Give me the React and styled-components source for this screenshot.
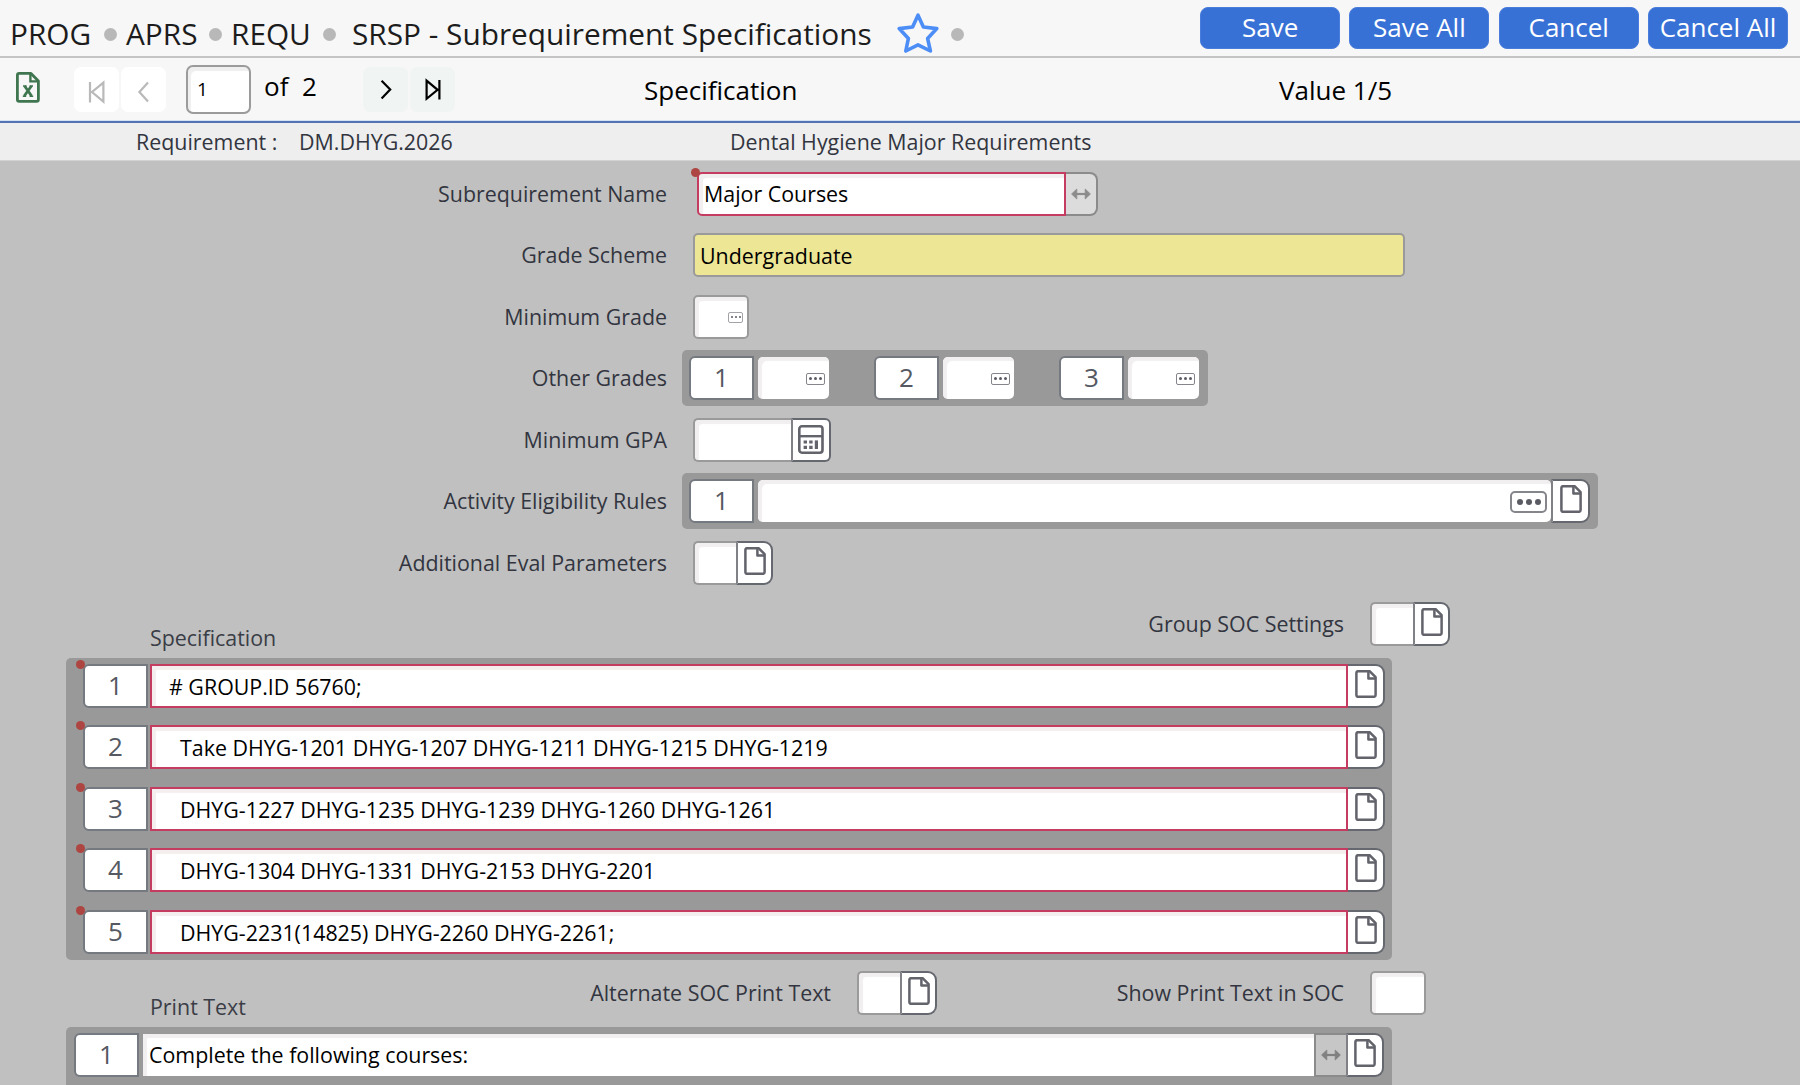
import styled, { createGlobalStyle } from 'styled-components';
import React from 'react';

const specLines = [
  { no: 1, text: '# GROUP.ID 56760;', indent: 13 },
  { no: 2, text: 'Take DHYG-1201 DHYG-1207 DHYG-1211 DHYG-1215 DHYG-1219', indent: 24 },
  { no: 3, text: 'DHYG-1227 DHYG-1235 DHYG-1239 DHYG-1260 DHYG-1261', indent: 24 },
  { no: 4, text: 'DHYG-1304 DHYG-1331 DHYG-2153 DHYG-2201', indent: 24 },
  { no: 5, text: 'DHYG-2231(14825) DHYG-2260 DHYG-2261;', indent: 24 },
];

function DocIcon() {
  return (
    <DocSvg width="22" height="28" viewBox="0 0 22 28">
      <path d="M3.2 1.2 H14.6 L20.6 7.2 V25 Q20.6 26.8 18.8 26.8 H3.2 Q1.4 26.8 1.4 25 V3 Q1.4 1.2 3.2 1.2 Z" />
      <path d="M13.4 1.6 V8.4 H20.2" />
    </DocSvg>
  );
}

function CalcIcon() {
  return (
    <svg width="26" height="29" viewBox="0 0 26 29" fill="none" stroke="#62636b">
      <rect x="1.3" y="1.3" width="23.2" height="26.4" rx="2.6" strokeWidth="2.6" />
      <path d="M1.3 11.2 H24.5" strokeWidth="2.4" />
      <path d="M5.6 17 H9 M11.2 17 H14.6 M5.6 22.4 H9 M11.2 22.4 H14.6" strokeWidth="3.2" />
      <path d="M18.4 15.4 V24" strokeWidth="3.2" />
    </svg>
  );
}

function ExcelIcon() {
  return (
    <svg width="24" height="31" viewBox="0 0 24 31" fill="none" stroke="#3f7650">
      <path
        d="M3.2 1.4 H15 L22.4 9 V27.6 Q22.4 29.4 20.6 29.4 H3.2 Q1.4 29.4 1.4 27.6 V3.2 Q1.4 1.4 3.2 1.4 Z"
        strokeWidth="2.8"
        strokeLinejoin="round"
      />
      <path d="M14.4 2 V9.4 H22" strokeWidth="2.4" />
      <path d="M8.6 14 L15.6 24 M15.4 14 L8.2 24" strokeWidth="2.8" />
      <path d="M7 14 H10.6 M13.6 14 H17 M6.8 24.2 H10.2 M13.6 24.2 H17.2" strokeWidth="1.6" />
    </svg>
  );
}

function StarIcon() {
  return (
    <svg width="42" height="40" viewBox="0 0 42 40" fill="none" stroke="#4d8df6">
      <path
        d="M21 2.2 L26.4 14 L39.8 15.6 L30.6 25.4 L33.4 38 L21 31.8 L8.8 38 L11.4 25.4 L2.2 15.6 L15.6 14 Z"
        strokeWidth="3.6"
        strokeLinejoin="round"
      />
    </svg>
  );
}

function ArrowsIcon({ color }) {
  return (
    <svg width="20" height="12" viewBox="0 0 20 12" fill={color} stroke={color}>
      <path d="M4 6 H16" strokeWidth="2.2" />
      <path d="M0.6 6 L5.8 1 V11 Z M19.4 6 L14.2 1 V11 Z" strokeWidth="0.8" />
    </svg>
  );
}

function Dots({ size }) {
  return (
    <DotsBox $size={size}>
      <i />
      <i />
      <i />
    </DotsBox>
  );
}

function DocField({ width, docWidth = 37 }) {
  return (
    <Control>
      <Field $width={width} $joined />
      <SideButton $width={docWidth}>
        <DocIcon />
      </SideButton>
    </Control>
  );
}

function App() {
  return (
    <Page>
      <GlobalStyle />
      <TitleBar>
        <Crumb $width={94}>PROG</Crumb>
        <Dot />
        <Crumb $width={83} $before={9}>APRS</Crumb>
        <Dot />
        <Crumb $width={92} $before={9}>REQU</Crumb>
        <Dot />
        <Crumb $width={545} $before={16}>SRSP - Subrequirement Specifications</Crumb>
        <StarIcon />
        <Dot $before={12} />
        <Actions>
          <Action>Save</Action>
          <Action>Save All</Action>
          <Action>Cancel</Action>
          <Action>Cancel All</Action>
        </Actions>
      </TitleBar>

      <Toolbar>
        <ExcelIcon />
        <PagerGroup $before={34}>
          <PagerButton $off>
            <svg width="18" height="26" viewBox="0 0 18 26">
              <path d="M2 3 V23.4 M15.4 3.6 V22.6 L4 13 Z" />
            </svg>
          </PagerButton>
          <PagerButton $off>
            <svg width="18" height="26" viewBox="0 0 18 26">
              <path d="M13 3.4 L4.4 13 L13 22.6" />
            </svg>
          </PagerButton>
        </PagerGroup>
        <PageInput>1</PageInput>
        <PageCount>of&nbsp; 2</PageCount>
        <PagerGroup>
          <PagerButton>
            <svg width="18" height="26" viewBox="0 0 18 26">
              <path d="M4.6 3.8 L13.2 12.6 L4.6 21.4" />
            </svg>
          </PagerButton>
          <PagerButton>
            <svg width="18" height="26" viewBox="0 0 18 26">
              <path d="M15.4 3 V22.6 M2.6 3.6 V21.8 L13.6 12.8 Z" />
            </svg>
          </PagerButton>
        </PagerGroup>
        <ToolText $before={189} $width={447}>Specification</ToolText>
        <ToolText $before={188}>Value 1/5</ToolText>
      </Toolbar>

      <RequirementBar>
        <Info $width={163}>Requirement :</Info>
        <Info $width={431}>DM.DHYG.2026</Info>
        <Info>Dental Hygiene Major Requirements</Info>
      </RequirementBar>

      <Form>
        <Row>
          <Label>Subrequirement Name</Label>
          <Control $before={30}>
            <RequiredDot />
            <Field $width={369} $required $joined>Major Courses</Field>
            <Expander $end><ArrowsIcon color="#8c8c8c" /></Expander>
          </Control>
        </Row>
        <Row>
          <Label>Grade Scheme</Label>
          <Control>
            <Field $width={712} $readonly>Undergraduate</Field>
          </Control>
        </Row>
        <Row>
          <Label>Minimum Grade</Label>
          <Control>
            <Field $width={56}><Dots size="tiny" /></Field>
          </Control>
        </Row>
        <Row>
          <Label>Other Grades</Label>
          <Strip $width={526}>
            {[1, 2, 3].map((n) => (
              <Grade key={n}>
                <Num>{n}</Num>
                <Field $width={71} $plain><Dots size="small" /></Field>
              </Grade>
            ))}
          </Strip>
        </Row>
        <Row>
          <Label>Minimum GPA</Label>
          <Control>
            <Field $width={98} $joined />
            <SideButton $width={40} $small><CalcIcon /></SideButton>
          </Control>
        </Row>
        <Row>
          <Label>Activity Eligibility Rules</Label>
          <Strip $width={916}>
            <Grade>
              <Num>1</Num>
              <Field $width={793} $plain><Dots size="large" /></Field>
            </Grade>
            <SideButton $width={39}><DocIcon /></SideButton>
          </Strip>
        </Row>
        <Row>
          <Label>Additional Eval Parameters</Label>
          <DocField width={43} />
        </Row>
        <Row>
          <Heading>Specification</Heading>
          <Label $width={1194}>Group SOC Settings</Label>
          <DocField width={43} />
        </Row>

        <Panel>
          {specLines.map((line) => (
            <SpecRow key={line.no}>
              <RequiredDot $far />
              <Num>{line.no}</Num>
              <SpecField $indent={line.indent}>{line.text}</SpecField>
              <SideButton $width={37}><DocIcon /></SideButton>
            </SpecRow>
          ))}
        </Panel>

        <Row>
          <Heading>Print Text</Heading>
          <Label $width={681}>Alternate SOC Print Text</Label>
          <DocField width={43} />
          <Label $width={407}>Show Print Text in SOC</Label>
          <Control>
            <Field $width={56} />
          </Control>
        </Row>

        <Panel $last>
          <PrintRow>
            <Num>1</Num>
            <Field $width={1171} $plain>Complete the following courses:</Field>
            <Expander><ArrowsIcon color="#808080" /></Expander>
            <SideButton $width={38}><DocIcon /></SideButton>
          </PrintRow>
        </Panel>
      </Form>
    </Page>
  );
}

const GlobalStyle = createGlobalStyle`
  * {
    box-sizing: border-box;
  }
  body {
    margin: 0;
    background-color: #c0c0c0;
    overflow: hidden;
  }
`;

const Page = styled.div`
  width: 1800px;
  height: 1085px;
  overflow: hidden;
  background-color: #c0c0c0;
  font-family: 'Open Sans', 'Noto Sans', sans-serif;
  font-size: 21.4px;
  color: #000;
  white-space: nowrap;

  svg {
    flex: none;
    display: block;
  }
`;

const TitleBar = styled.header`
  display: flex;
  align-items: center;
  height: 58px;
  padding: 10px 12px 0 10px;
  background-color: #f7f7f7;
  border-bottom: 2px solid #c4c4c4;
  color: #1c1c1c;
`;

const Crumb = styled.span`
  width: ${(p) => p.$width}px;
  margin: 1px 0 0 ${(p) => p.$before || 0}px;
  font-size: 29.8px;
  line-height: 40px;
  flex: none;
`;

const Dot = styled.span`
  width: 13px;
  height: 13px;
  margin: 2px 0 0 ${(p) => p.$before || 0}px;
  border-radius: 50%;
  background-color: #b8b8b8;
  flex: none;
`;

const Actions = styled.div`
  display: flex;
  gap: 9.3px;
  margin: -10px 0 0 auto;
`;

const Action = styled.button`
  width: 140px;
  height: 42px;
  padding: 0 0 2px;
  border: 1px solid #4a7cdb;
  border-radius: 8px;
  background-color: #3871d6;
  color: #fff;
  font: 26px/36px 'Open Sans', 'Noto Sans', sans-serif;
  white-space: nowrap;
`;

const Toolbar = styled.div`
  display: flex;
  align-items: center;
  height: 65px;
  padding-left: 16px;
  background-color: #f7f7f7;
  border-bottom: 2px solid #5373b4;
  box-shadow: inset 0 -1px 0 #d5e1f5;

  > svg {
    margin-top: -4px;
  }
`;

const PagerGroup = styled.div`
  display: flex;
  gap: 2px;
  margin-left: ${(p) => p.$before || 0}px;
`;

const PagerButton = styled.span`
  display: flex;
  align-items: center;
  justify-content: center;
  width: 45px;
  height: 45px;
  padding-top: ${(p) => (p.$off ? 5 : 1)}px;
  border-radius: 7px;
  background-color: ${(p) => (p.$off ? '#fff' : '#f0f4f3')};

  path {
    fill: none;
    stroke: ${(p) => (p.$off ? '#b9b9b9' : '#000')};
    stroke-width: 2.2;
  }
`;

const PageInput = styled.div`
  width: 65px;
  height: 49px;
  margin-left: 20px;
  padding-left: 9px;
  border: 2px solid #9b9b9b;
  border-radius: 7px;
  background-color: #fff;
  box-shadow: inset 3px 4px 1px #efefef;
  font-size: 19px;
  line-height: 45px;
`;

const PageCount = styled.span`
  width: 99px;
  margin: -8px 0 0 13px;
  font-size: 26px;
`;

const ToolText = styled.span`
  width: ${(p) => (p.$width ? `${p.$width}px` : 'auto')};
  margin: 1px 0 0 ${(p) => p.$before}px;
  font-size: 26px;
`;

const RequirementBar = styled.div`
  display: flex;
  align-items: center;
  height: 38px;
  padding: 0 0 1px 136px;
  background-color: #eee;
  border-bottom: 1px solid #d2d2d2;
`;

const Info = styled.span`
  width: ${(p) => (p.$width ? `${p.$width}px` : 'auto')};
  color: #32353f;
`;

const Form = styled.main`
  padding-top: 2px;
`;

const Row = styled.div`
  display: flex;
  align-items: center;
  height: 61.5px;
`;

const Label = styled.span`
  width: ${(p) => p.$width || 667}px;
  padding-bottom: 1px;
  flex: none;
  color: #32353f;
  text-align: right;
`;

const Heading = styled.span`
  width: 150px;
  height: 1px;
  padding-left: 150px;
  line-height: 28px;
  color: #3a3d46;
`;

const Control = styled.div`
  position: relative;
  display: flex;
  margin-left: ${(p) => p.$before || 26}px;
`;

const Field = styled.div`
  display: flex;
  align-items: center;
  width: ${(p) => p.$width}px;
  height: ${(p) => (p.$plain ? 42 : 44)}px;
  padding: 0 6px 0 5px;
  border: ${(p) => (p.$plain ? '0' : '2px')} solid ${(p) => (p.$required ? '#c43c60' : '#9a9a9a')};
  border-radius: ${(p) => (p.$joined ? '5px 0 0 5px' : '5px')};
  border-right-width: ${(p) => (p.$joined && !p.$required ? 0 : '')};
  background-color: ${(p) => (p.$readonly ? '#ede695' : '#fff')};
  box-shadow: ${(p) => (p.$readonly ? 'none' : 'inset 4px 4px 1px #f1efef')};
`;

const SideButton = styled.span`
  display: flex;
  justify-content: center;
  width: ${(p) => p.$width}px;
  height: 44px;
  padding-top: 5px;
  border: 2px solid #666870;
  border-left-color: #808187;
  border-radius: ${(p) => (p.$small ? '0 6px 6px 0' : '0 9px 9px 0')};
  background-color: #fff;
  flex: none;
`;

const DocSvg = styled.svg`
  margin-top: -1px;
  fill: none;
  stroke: #62636b;
  stroke-width: 2.5;
  stroke-linejoin: round;
`;

const Expander = styled.span`
  display: flex;
  align-items: center;
  justify-content: center;
  width: 32px;
  height: 44px;
  border: 2px solid #8b8b8b;
  border-left-width: ${(p) => (p.$end ? 0 : '2px')};
  border-right-width: ${(p) => (p.$end ? '2px' : 0)};
  border-radius: ${(p) => (p.$end ? '0 8px 8px 0' : 0)};
  background-color: ${(p) => (p.$end ? '#dcdcdc' : '#c6c6c6')};
  flex: none;
`;

const RequiredDot = styled.i`
  position: absolute;
  left: ${(p) => (p.$far ? -7.5 : -6)}px;
  top: -4px;
  width: 9px;
  height: 9px;
  border-radius: 50%;
  background-color: #ad4642;
`;

const sizes = {
  tiny: { w: 15, h: 11, dot: 2, gap: 2, line: 1, color: '#a2a3a7' },
  small: { w: 19, h: 12, dot: 3, gap: 2, line: 1, color: '#85868b' },
  large: { w: 37, h: 22, dot: 6, gap: 3, line: 2, color: '#85868c' },
};

const DotsBox = styled.span`
  display: flex;
  align-items: center;
  justify-content: center;
  gap: ${(p) => sizes[p.$size].gap}px;
  width: ${(p) => sizes[p.$size].w}px;
  height: ${(p) => sizes[p.$size].h}px;
  margin: 1px -2px 0 auto;
  border: ${(p) => sizes[p.$size].line}px solid ${(p) => sizes[p.$size].color};
  border-radius: ${(p) => (p.$size === 'large' ? 5 : 2)}px;

  i {
    width: ${(p) => sizes[p.$size].dot}px;
    height: ${(p) => sizes[p.$size].dot}px;
    border-radius: 50%;
    background-color: #5b5c63;
  }
`;

const Strip = styled.div`
  display: flex;
  align-items: center;
  gap: 45px;
  width: ${(p) => p.$width}px;
  height: 56px;
  margin-left: 15px;
  padding-left: 7px;
  border-radius: 5px;
  background-color: #999;

  ${SideButton} {
    margin-left: -45px;
  }
`;

const Grade = styled.div`
  display: flex;
  align-items: center;
  gap: 4px;
`;

const Num = styled.span`
  width: 65px;
  height: 44px;
  border: 2px solid #757980;
  border-radius: 6px 0 0 6px;
  background-color: #fff;
  color: #555962;
  font-size: 26px;
  line-height: 39px;
  text-align: center;
  flex: none;
`;

const Panel = styled.section`
  display: flex;
  flex-direction: column;
  gap: 17.4px;
  width: 1326px;
  height: ${(p) => (p.$last ? 70 : 302)}px;
  margin: ${(p) => (p.$last ? '2.5px 0 0 66px' : '3px 0 2.5px 66px')};
  padding-top: 6px;
  border-radius: 5px;
  background-color: #999;
`;

const SpecRow = styled.div`
  position: relative;
  display: flex;
  gap: 2px;
  margin-left: 17px;

  ${SideButton} {
    margin-left: -2px;
    border-left: 0;
  }
`;

const SpecField = styled.div`
  width: 1198px;
  height: 44px;
  padding-left: ${(p) => p.$indent + 4}px;
  border: 2px solid #c43c60;
  background-color: #fff;
  box-shadow: inset 4px 4px 1px #f4eeee;
  line-height: 41px;
`;

const PrintRow = styled.div`
  display: flex;
  align-items: center;
  margin-left: 8px;

  ${Field} {
    margin-left: 4px;
    padding-left: 6px;
    border-radius: 0;
  }
`;

export default App;
